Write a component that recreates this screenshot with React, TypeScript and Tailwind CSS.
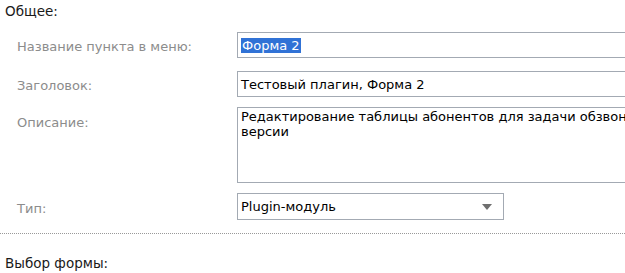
const font = { fontFamily: '"DejaVu Sans", Tahoma, sans-serif' };

function Field({ label, children, top = false }: { label: string; children: React.ReactNode; top?: boolean }) {
  return (
    <div className={`flex ${top ? "items-start" : "items-center"}`}>
      <div className={`w-[237px] shrink-0 pl-[17px] text-[13px] text-[#8c8c8c] ${top ? "pt-[8px]" : "pt-[3px]"}`}>
        {label}
      </div>
      {children}
    </div>
  );
}

export default function App() {
  return (
    <div
      className="w-[625px] h-[273px] overflow-hidden bg-white text-[13px] leading-[15px] text-black"
      style={font}
    >
      <div className="pt-[4px] pl-[5px] text-[13.5px] text-[#1a1a1a]">Общее:</div>

      <div className="mt-[13px] flex flex-col">
        <Field label="Название пункта в меню:">
          <div className="h-[26px] w-[420px] shrink-0 border border-[#a3aab3] flex items-center pl-[3px]">
            <span className="bg-[#3072d6] text-white px-[1px] leading-[15px]">Форма 2</span>
          </div>
        </Field>

        <div className="mt-[13px]">
          <Field label="Заголовок:">
            <div className="h-[26px] w-[420px] shrink-0 border border-[#a3aab3] flex items-center pl-[3px]">
              Тестовый плагин, Форма 2
            </div>
          </Field>
        </div>

        <div className="mt-[10px]">
          <Field label="Описание:" top>
            <div className="h-[76px] w-[420px] shrink-0 border border-[#a3aab3] pl-[3px] pt-[1px] overflow-hidden">
              <div className="whitespace-nowrap">Редактирование таблицы абонентов для задачи обзвона в демо-</div>
              <div>версии</div>
            </div>
          </Field>
        </div>

        <div className="mt-[10px]">
          <Field label="Тип:">
            <div className="h-[27px] w-[267px] shrink-0 border border-[#a3aab3] flex items-center justify-between pl-[3px] pr-[11px]">
              <span>Plugin-модуль</span>
              <svg width="10" height="6" viewBox="0 0 10 6">
                <path d="M0 0h10L5 6z" fill="#6f6f6f" />
              </svg>
            </div>
          </Field>
        </div>
      </div>

      <div className="mt-[13px] border-t border-dotted border-[#999999]" />

      <div className="mt-[22px] pl-[5px] text-[13.5px] text-[#1a1a1a]">Выбор формы:</div>
    </div>
  );
}
